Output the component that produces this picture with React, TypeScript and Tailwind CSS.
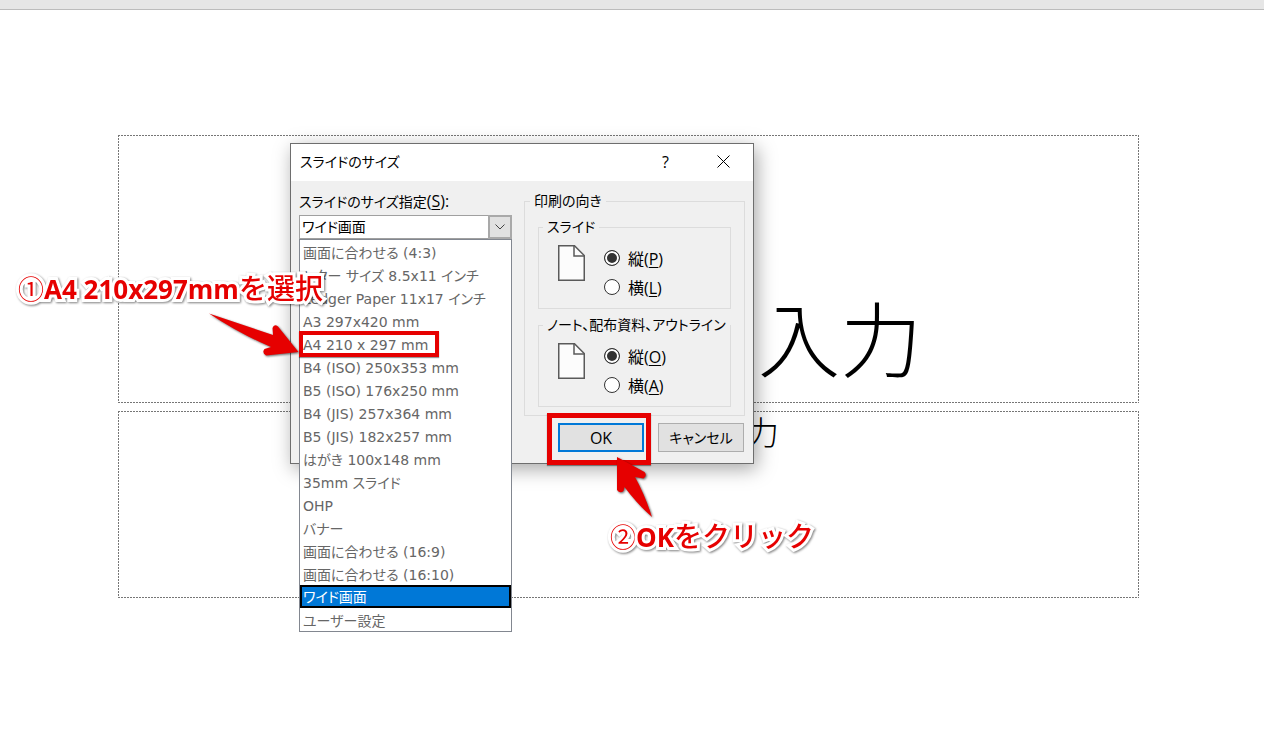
import React, { useState } from 'react'
import clsx from 'clsx'

const SIZES = [
	'画面に合わせる (4:3)',
	'レター サイズ 8.5x11 インチ',
	'Ledger Paper 11x17 インチ',
	'A3 297x420 mm',
	'A4 210 x 297 mm',
	'B4 (ISO) 250x353 mm',
	'B5 (ISO) 176x250 mm',
	'B4 (JIS) 257x364 mm',
	'B5 (JIS) 182x257 mm',
	'はがき 100x148 mm',
	'35mm スライド',
	'OHP',
	'バナー',
	'画面に合わせる (16:9)',
	'画面に合わせる (16:10)',
	'ワイド画面',
	'ユーザー設定',
]

const PageIcon = () => (
	<svg width="27" height="36" viewBox="0 0 27 36" fill="none" stroke="#5a5a5a" aria-hidden="true">
		<path d="M0.75 0.75H16.5L26.25 10.5V35.25H0.75Z" fill="#fcfcfc" strokeWidth="1.5" />
		<path d="M16 0.75V11H26.25" strokeWidth="1.5" />
	</svg>
)

const Placeholder: React.FunctionComponent<{ className: string; children: React.ReactNode }> = ({
	className,
	children,
}) => (
	<div className={clsx('relative overflow-hidden text-right font-light text-black', className)}>
		<svg className="absolute inset-0 h-full w-full" aria-hidden="true">
			<g stroke="#767676" strokeWidth="2" strokeDasharray="2 1">
				<line x1="0" y1="0" x2="100%" y2="0" />
				<line x1="0" y1="100%" x2="100%" y2="100%" />
				<line x1="0" y1="0" x2="0" y2="100%" />
				<line x1="100%" y1="0" x2="100%" y2="100%" />
			</g>
		</svg>
		{children}
	</div>
)

const OrientationGroup: React.FunctionComponent<{
	title: string
	name: string
	keys: [string, string]
}> = ({ title, name, keys }) => {
	const [value, setValue] = useState('縦')

	return (
		<fieldset className="border border-[#dcdcdc]">
			<legend className="ml-1 px-1 leading-5 whitespace-nowrap">{title}</legend>
			<div className="flex gap-[19px] pt-1.5 pb-[7px] pl-[19px]">
				<div className="pt-0.5">
					<PageIcon />
				</div>
				<div>
					{['縦', '横'].map((label, i) => (
						<label key={label} className="flex h-[29px] items-center gap-2 text-base leading-6">
							<input
								type="radio"
								name={name}
								checked={value === label}
								onChange={() => setValue(label)}
								className="size-4 appearance-none rounded-full border border-[#333] bg-white checked:bg-[#333] checked:shadow-[inset_0_0_0_2px_#fff]"
							/>
							<span className="pt-0.5">
								{label}(<u className="underline-offset-2">{keys[i]}</u>)
							</span>
						</label>
					))}
				</div>
			</div>
		</fieldset>
	)
}

const SizeList: React.FunctionComponent<{
	selected: string
	onSelect: (size: string) => void
}> = ({ selected, onSelect }) => (
	<ul
		role="listbox"
		aria-label="スライドのサイズ指定"
		className="absolute top-full left-0 z-10 w-full border border-[#828790] bg-white font-['DejaVu_Sans','Noto_Sans_CJK_JP',sans-serif] text-[#666]"
	>
		{SIZES.map(size => (
			<li
				key={size}
				role="option"
				aria-selected={size === selected}
				onClick={() => onSelect(size)}
				className={clsx(
					'h-[23px] overflow-hidden whitespace-nowrap',
					size === selected
						? 'border-2 border-black bg-[#0078d7] px-px leading-[21px] text-white'
						: 'px-[3px] leading-[26px]'
				)}
			>
				{size}
			</li>
		))}
	</ul>
)

const SlideSizeDialog = () => {
	const [size, setSize] = useState('ワイド画面')

	return (
		<div
			role="dialog"
			aria-label="スライドのサイズ"
			className="absolute top-[143px] left-[290px] w-[464px] border border-[#6e6e6e] bg-[#f0f0f0] text-sm text-black shadow-[3px_5px_18px_rgba(0,0,0,0.35)]"
		>
			<div className="flex h-[37px] items-center bg-white pb-0.5 pl-[9px]">
				<h1 className="flex-1">スライドのサイズ</h1>
				<button type="button" className="w-[58px] pl-px text-center text-base">
					?
				</button>
				<button type="button" aria-label="閉じる" className="flex w-[59px] justify-center">
					<svg width="13" height="13" viewBox="0 0 13 13" stroke="#000">
						<path d="M0.5 0.5L12.5 12.5M12.5 0.5L0.5 12.5" />
					</svg>
				</button>
			</div>

			<div className="flex gap-3 px-2 pt-2.5">
				<div className="w-[213px]">
					<label htmlFor="slideSize" className="block h-6 leading-5">
						スライドのサイズ指定
						<span className="text-base leading-5">
							(<u className="underline-offset-2">S</u>):
						</span>
					</label>
					<div className="relative">
						<select
							id="slideSize"
							value={size}
							onChange={e => setSize(e.target.value)}
							className="block h-6 w-full appearance-none border border-[#a0a0a0] bg-white pl-0.5 leading-5"
						>
							{SIZES.map(option => (
								<option key={option}>{option}</option>
							))}
						</select>
						<span className="pointer-events-none absolute top-0 right-0 flex h-6 w-6 items-center justify-center border-2 border-[#a9a9a9] bg-[#e1e1e1]">
							<svg width="10" height="6" viewBox="0 0 10 6" fill="none" stroke="#444">
								<path d="M0.5 0.5L5 5L9.5 0.5" />
							</svg>
						</span>
						<SizeList selected={size} onSelect={setSize} />
					</div>
				</div>

				<fieldset className="flex-1 border border-[#dcdcdc] px-[13px] pb-2">
					<legend className="-ml-2 px-1 leading-5">印刷の向き</legend>
					<div className="flex flex-col gap-1.5 pt-1.5">
						<OrientationGroup title="スライド" name="slide" keys={['P', 'L']} />
						<OrientationGroup
							title="ノート、配布資料、アウトライン"
							name="notes"
							keys={['O', 'A']}
						/>
					</div>
				</fieldset>
			</div>

			<div className="flex justify-end gap-3.5 pt-[7px] pr-[9px] pb-[11px]">
				<button
					type="button"
					className="h-[29px] w-[86px] border-2 border-[#0078d7] bg-[#e1e1e1] text-base leading-6"
				>
					OK
				</button>
				<button type="button" className="h-[29px] w-[86px] border border-[#adadad] bg-[#e1e1e1]">
					キャンセル
				</button>
			</div>
		</div>
	)
}

const Callout: React.FunctionComponent<{
	className: string
	mark: string
	latin: string
	text: string
}> = ({ className, mark, latin, text }) => (
	<p
		className={clsx(
			'absolute z-20 text-[28px] leading-9 font-medium whitespace-nowrap text-[#e60000] drop-shadow-[1px_1px_1px_rgba(0,0,0,0.5)] [-webkit-text-stroke:6px_white] [font-feature-settings:normal] [paint-order:stroke_fill] [stroke-linejoin:round]',
			className
		)}
	>
		<span className="text-[26px] font-normal">{mark}</span>
		<span className="font-['Open_Sans',sans-serif] text-[26px] font-bold">{latin}</span>
		{text}
	</p>
)

const Arrow: React.FunctionComponent<{ className: string; viewBox: string; d: string }> = ({
	className,
	viewBox,
	d,
}) => (
	<svg
		className={clsx('absolute z-20 drop-shadow-[1px_1px_1px_rgba(0,0,0,0.6)]', className)}
		viewBox={viewBox}
		fill="#e60000"
		aria-hidden="true"
	>
		<path d={d} />
	</svg>
)

const App = () => {
	return (
		<div className="relative min-h-screen overflow-hidden bg-white font-['Open_Sans','Noto_Sans_CJK_JP',sans-serif] [font-feature-settings:'palt']">
			<div className="h-2.5 border-b border-[#bcbcbc] bg-[#e6e6e6]" />

			<main className="flex flex-col gap-2 pt-[125px] pr-[125px] pl-[118px] [font-feature-settings:normal]">
				<Placeholder className="h-[268px] pt-[149px] pr-[217px] text-[82px] leading-[110px]">
					入力
				</Placeholder>
				<Placeholder className="h-[187px] pr-[360px] text-[33px] leading-[44px]">力</Placeholder>
			</main>

			<SlideSizeDialog />

			<div className="absolute top-[331px] left-[299px] z-20 h-[26px] w-[140px] border-4 border-[#e60000] shadow-[0_1px_1px_rgba(0,0,0,0.4)]" />
			<div className="absolute top-[413px] left-[547px] z-20 h-[52px] w-[104px] border-5 border-[#e60000] shadow-[0_1px_1px_rgba(0,0,0,0.4)]" />

			<Callout className="top-[270px] left-[18px]" mark="①" latin="A4 210x297mm" text="を選択" />
			<Arrow
				className="top-[310px] left-[205px] h-[50px] w-[100px]"
				viewBox="205 310 100 50"
				d="M209 313.5L273 335L272.500 328Q274 323.500 278 326.500L298.500 352L266 355.500Q261.500 352.500 264.500 349L271 347Q240 334 209 313.500Z"
			/>
			<Callout className="top-[518px] left-[610px]" mark="②" latin="OK" text="をクリック" />
			<Arrow
				className="top-[450px] left-[610px] h-[72px] w-[50px]"
				viewBox="610 450 50 72"
				d="M617 457L644.500 472Q647.500 475.500 643.500 478.500L635 477Q645 495 652 517Q638 505 624.500 487L623.500 491Q620 494 617 490Z"
			/>
		</div>
	)
}

export default App
